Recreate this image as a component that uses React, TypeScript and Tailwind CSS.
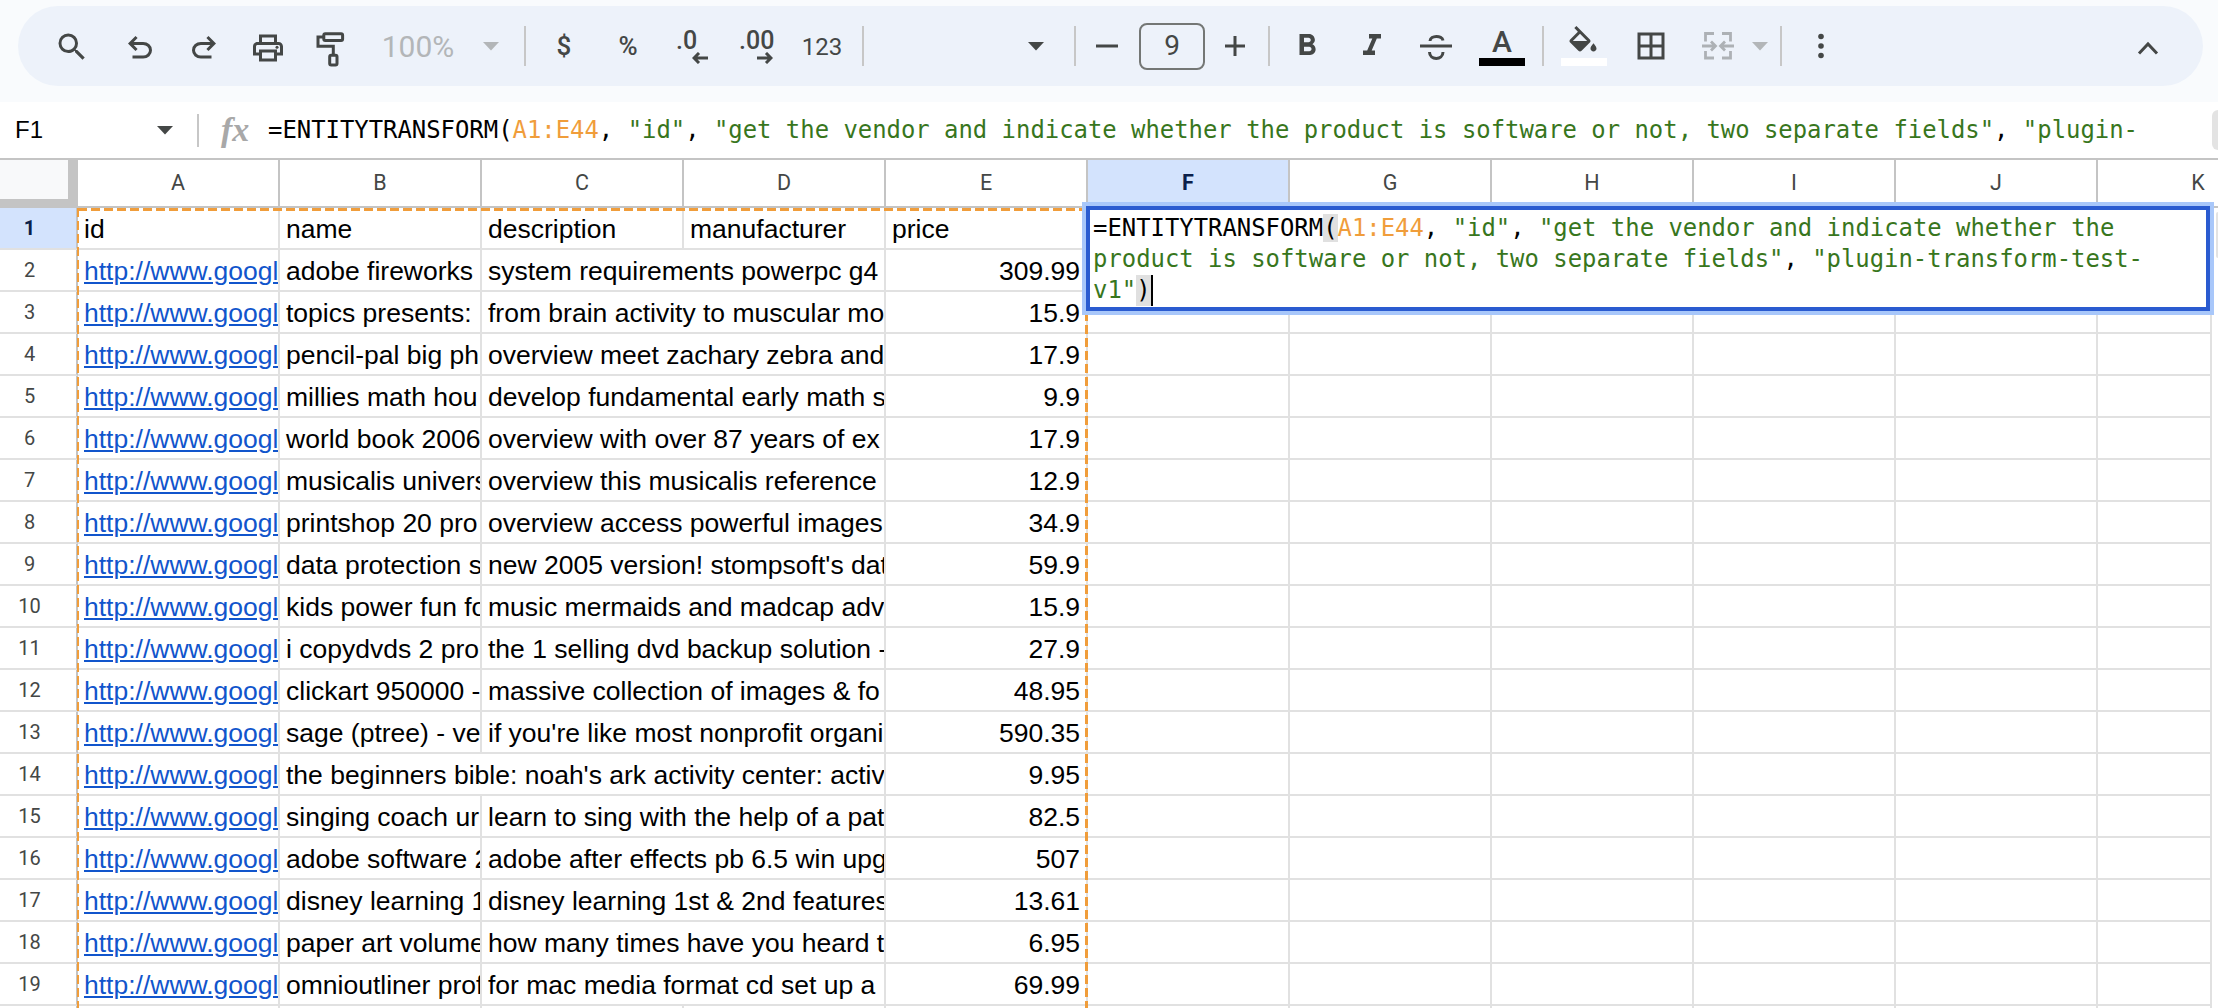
import React from "react";

const INK = "#444746";
const MUTED = "#b3b6b8";

function Svg({ children, className = "" }: { children: React.ReactNode; className?: string }) {
  return (
    <svg viewBox="0 0 24 24" width="36" height="36" fill={INK} className={className}>
      {children}
    </svg>
  );
}

function Slot({ className = "", children }: { className?: string; children?: React.ReactNode }) {
  return <div className={`flex h-[40px] w-[40px] shrink-0 items-center justify-center ${className}`}>{children}</div>;
}

function Caret({ color = INK, className = "" }: { color?: string; className?: string }) {
  return (
    <svg width="20" height="10" viewBox="0 0 20 10" className={`shrink-0 ${className}`}>
      <polygon points="2,1 18,1 10,9.5" fill={color} />
    </svg>
  );
}

function Divider({ className = "" }: { className?: string }) {
  return <div className={`h-[40px] w-[2px] shrink-0 bg-[#c7c7c7] ${className}`} />;
}

function Arrow({ left = false }: { left?: boolean }) {
  return (
    <svg width="17" height="12" viewBox="0 0 17 12" fill="none" stroke={INK} strokeWidth="3" className="block">
      {left ? <path d="M16 6H2M7 1L2 6l5 5" /> : <path d="M1 6h14M10 1l5 5-5 5" />}
    </svg>
  );
}

function Toolbar() {
  return (
    <div className="h-[102px] bg-[#f9fbfd] pl-[18px] pt-[6px]">
      <div className="flex h-[80px] w-[2185px] items-center rounded-[40px] bg-[#edf2fa] pl-[34px] pr-[35px] font-['Roboto',sans-serif] text-[#444746]">
        <Slot className="mt-[2px]">
          <Svg>
            <path d="M15.5 14h-.79l-.28-.27A6.471 6.471 0 0 0 16 9.5 6.5 6.5 0 1 0 9.5 16c1.61 0 3.09-.59 4.23-1.57l.27.28v.79l5 4.99L20.49 19l-4.99-5zm-6 0C7.01 14 5 11.99 5 9.5S7.01 5 9.5 5 14 7.01 14 9.5 11.99 14 9.5 14z" />
          </Svg>
        </Slot>
        <Slot className="ml-[28px] mt-[4px]">
          <Svg>
            <path d="M7 19v-2h7.1q1.575 0 2.738-1T18 13.5t-1.162-2.5T14.1 10H7.8l2.6 2.6L9 14 4 9l5-5 1.4 1.4L7.8 8h6.3q2.425 0 4.163 1.575T20 13.5t-1.737 3.925T14.1 19H7z" />
          </Svg>
        </Slot>
        <Slot className="ml-[24px] mt-[4px]">
          <Svg className="-scale-x-100">
            <path d="M7 19v-2h7.1q1.575 0 2.738-1T18 13.5t-1.162-2.5T14.1 10H7.8l2.6 2.6L9 14 4 9l5-5 1.4 1.4L7.8 8h6.3q2.425 0 4.163 1.575T20 13.5t-1.737 3.925T14.1 19H7z" />
          </Svg>
        </Slot>
        <Slot className="ml-[24px] mt-[4px]">
          <Svg>
            <path d="M19 8h-1V3H6v5H5c-1.66 0-3 1.34-3 3v6h4v4h12v-4h4v-6c0-1.66-1.34-3-3-3zM8 5h8v3H8V5zm8 12v2H8v-4h8v2zm2-2v-2H6v2H4v-4c0-.55.45-1 1-1h14c.55 0 1 .45 1 1v4h-2z" />
            <circle cx="18" cy="11.5" r="1" />
          </Svg>
        </Slot>
        <Slot className="ml-[22px] mt-[4px]">
          <svg width="40" height="40" viewBox="0 0 40 40" fill="none" stroke={INK} strokeWidth="3">
            <rect x="13.8" y="5.8" width="18.8" height="6.6" rx="1.5" />
            <path d="M13.8 9H8v9.3h15.3V27" />
            <rect x="19.7" y="27.3" width="7.3" height="9.7" rx="1.5" />
          </svg>
        </Slot>
        <div className="ml-[30px] mt-[2px] w-[76px] shrink-0 text-center text-[30px] leading-[40px] text-[#b3b6b8]">100%</div>
        <Caret color={MUTED} className="ml-[25px]" />
        <Divider className="ml-[23px]" />
        <Slot className="ml-[18px] text-[26px] font-medium">$</Slot>
        <Slot className="ml-[24px] text-[26px] font-medium">%</Slot>
        <div className="ml-[23px] flex h-[40px] w-[40px] shrink-0 flex-col pl-[5px] pt-[3px] text-[25px] font-medium">
          <div className="h-[24px] leading-[24px]">.0</div>
          <div className="ml-[16px] mt-[-1px]">
            <Arrow left />
          </div>
        </div>
        <div className="ml-[21px] flex h-[40px] w-[50px] shrink-0 flex-col pl-[7px] pt-[3px] text-[25px] font-medium">
          <div className="h-[24px] leading-[24px]">.00</div>
          <div className="ml-[17px] mt-[-1px]">
            <Arrow />
          </div>
        </div>
        <div className="ml-[15px] mt-[1px] w-[50px] shrink-0 text-center text-[24px] leading-[40px]">123</div>
        <Divider className="ml-[15px]" />
        <Caret className="ml-[162px]" />
        <Divider className="ml-[28px]" />
        <Slot className="ml-[11px]">
          <svg width="22" height="4" viewBox="0 0 22 4">
            <rect width="22" height="3" y="0.5" fill={INK} />
          </svg>
        </Slot>
        <div className="ml-[12px] flex h-[47px] w-[66px] shrink-0 items-center justify-center rounded-[8px] border-2 border-[#747775] text-[28px]">
          9
        </div>
        <Slot className="ml-[10px]">
          <svg width="22" height="22" viewBox="0 0 22 22">
            <path d="M9.5 1h3v8.5H21v3h-8.5V21h-3v-8.5H1v-3h8.5z" fill={INK} />
          </svg>
        </Slot>
        <Divider className="ml-[13px]" />
        <Slot className="ml-[17px]">
          <Svg>
            <path d="M15.6 10.79c.97-.67 1.65-1.77 1.65-2.79 0-2.26-1.75-4-4-4H7v14h7.04c2.09 0 3.71-1.7 3.71-3.79 0-1.52-.86-2.82-2.15-3.42zM10 6.5h3c.83 0 1.5.67 1.5 1.5s-.67 1.5-1.5 1.5h-3v-3zm3.5 9H10v-3h3.5c.83 0 1.5.67 1.5 1.5s-.67 1.5-1.5 1.5z" />
          </Svg>
        </Slot>
        <Slot className="ml-[25px]">
          <Svg>
            <path d="M10 4v3h2.21l-3.42 8H6v3h8v-3h-2.21l3.42-8H18V4z" />
          </Svg>
        </Slot>
        <Slot className="ml-[24px]">
          <svg width="40" height="40" viewBox="0 0 40 40" fill="none" stroke={INK} strokeWidth="3">
            <path d="M4 20h32" />
            <path d="M14 15C14.5 9 26 9 27 14.5" />
            <path d="M13.5 26C13.5 34.500 27 34.500 27 26" />
          </svg>
        </Slot>
        <div className="ml-[23px] flex h-[40px] w-[46px] shrink-0 flex-col items-center">
          <div className="h-[32px] text-[30px] font-medium leading-[32px]">A</div>
          <div className="h-[8px] w-[46px] bg-black" />
        </div>
        <Divider className="ml-[17px]" />
        <div className="ml-[17px] flex h-[40px] w-[46px] shrink-0 flex-col items-center">
          <svg viewBox="0 0 24 24" width="36" height="36" fill={INK} className="mr-[3px] shrink-0">
            <path d="M16.56 8.94L7.62 0 6.21 1.41l2.38 2.38-5.15 5.15c-.59.59-.59 1.54 0 2.12l5.5 5.5c.29.29.68.44 1.06.44s.77-.15 1.06-.44l5.5-5.5c.59-.58.59-1.53 0-2.12zM5.21 10L10 5.21 14.79 10H5.21zM19 11.5s-2 2.17-2 3.5c0 1.1.9 2 2 2s2-.9 2-2c0-1.33-2-3.5-2-3.5z" />
          </svg>
          <div className="mt-[-4px] h-[8px] w-[46px] shrink-0 bg-white" />
        </div>
        <Slot className="ml-[24px]">
          <Svg>
            <path d="M3 3v18h18V3H3zm8 16H5v-6h6v6zm0-8H5V5h6v6zm8 8h-6v-6h6v6zm0-8h-6V5h6v6z" />
          </Svg>
        </Slot>
        <Slot className="ml-[27px]">
          <svg width="40" height="40" viewBox="0 0 40 40" fill="none" stroke="#adb1b5" strokeWidth="2.800">
            <path d="M16 7.500H7.500V15.500M7.500 25V32H16M24 7.500H32.500V15.500M32.500 25V32H24" />
            <path d="M4 20H17M13 15.500L17.500 20L13 24.500" />
            <path d="M36 20H23M27 15.500L22.500 20L27 24.500" />
          </svg>
        </Slot>
        <Caret color={MUTED} className="ml-[12px]" />
        <Divider className="ml-[10px]" />
        <Slot className="ml-[19px]">
          <svg width="8" height="28" viewBox="0 0 8 28" fill={INK}>
            <circle cx="4" cy="4.500" r="2.800" />
            <circle cx="4" cy="14" r="2.800" />
            <circle cx="4" cy="23.500" r="2.800" />
          </svg>
        </Slot>
        <Slot className="ml-auto mt-[4px]">
          <svg width="22" height="14" viewBox="0 0 22 14" fill="none" stroke={INK} strokeWidth="3">
            <path d="M2 12.500L11 3l9 9.500" />
          </svg>
        </Slot>
      </div>
    </div>
  );
}

const G = "text-[#38761d]";
const O = "text-[#f09d3b]";
const PAREN = "bg-[#e0e0e0]";
const MONO = "font-['DejaVu_Sans_Mono',monospace] text-[23.900px]";

function FormulaBar() {
  return (
    <div className="flex h-[58px] items-center border-b-2 border-[#c4c4c4] bg-white">
      <div className="w-[154px] shrink-0 pl-[15px] font-['Liberation_Sans',sans-serif] text-[24px] leading-[30px] text-black">F1</div>
      <Caret className="ml-[1px]" />
      <div className="ml-[22px] h-[33px] w-[2px] shrink-0 bg-[#c7c7c7]" />
      <div className="ml-[22px] w-[47px] shrink-0 font-['Liberation_Serif',serif] text-[34px] font-bold italic leading-[34px] text-[#a8a8a8]">fx</div>
      <div className={`w-[1880px] shrink-0 overflow-hidden whitespace-pre leading-[30px] text-black ${MONO}`}>
        =ENTITYTRANSFORM(<span className={O}>A1:E44</span>, <span className={G}>"id"</span>,{" "}
        <span className={G}>"get the vendor and indicate whether the product is software or not, two separate fields"</span>,{" "}
        <span className={G}>"plugin-</span>
      </div>
      <div className="ml-auto h-[40px] w-[6px] shrink-0 rounded-l-[8px] bg-[#e3e3e3]" />
    </div>
  );
}

const COLS = ["A", "B", "C", "D", "E", "F", "G", "H", "I", "J", "K"];
const LINE = "border-r-2 border-b-2 border-[#e1e1e1]";

const ROWS: [string, string, string][] = [
  ["adobe fireworks", "system requirements powerpc g4", "309.99"],
  ["topics presents:", "from brain activity to muscular mo", "15.9"],
  ["pencil-pal big ph", "overview meet zachary zebra and", "17.9"],
  ["millies math hou", "develop fundamental early math s", "9.9"],
  ["world book 2006", "overview with over 87 years of ex", "17.9"],
  ["musicalis univers", "overview this musicalis reference", "12.9"],
  ["printshop 20 pro", "overview access powerful images", "34.9"],
  ["data protection s", "new 2005 version! stompsoft's dat", "59.9"],
  ["kids power fun fo", "music mermaids and madcap adv", "15.9"],
  ["i copydvds 2 pro", "the 1 selling dvd backup solution -", "27.9"],
  ["clickart 950000 -", "massive collection of images & fo", "48.95"],
  ["sage (ptree) - ve", "if you're like most nonprofit organi", "590.35"],
  ["the beginners bible: noah's ark activity center: activ", "", "9.95"],
  ["singing coach ur", "learn to sing with the help of a pat", "82.5"],
  ["adobe software 2", "adobe after effects pb 6.5 win upg", "507"],
  ["disney learning 1", "disney learning 1st & 2nd features", "13.61"],
  ["paper art volume", "how many times have you heard t", "6.95"],
  ["omnioutliner prof", "for mac media format cd set up a", "69.99"],
];

function Empties({ n }: { n: number }) {
  return (
    <>
      {Array.from({ length: n }).map((_, i) => (
        <div key={i} className={LINE} />
      ))}
    </>
  );
}

function RowHead({ n, active = false }: { n: number; active?: boolean }) {
  return (
    <div
      className={`flex items-center justify-center border-r-2 border-b-2 border-r-[#c4c4c4] border-b-[#e1e1e1] pr-[17px] font-['Roboto',sans-serif] text-[20px] ${
        active ? "bg-[#d3e3fd] font-bold text-[#0b1f4b]" : "bg-white text-[#444746]"
      }`}
    >
      {n}
    </div>
  );
}

const CELL = `flex items-center overflow-hidden whitespace-nowrap pl-[6px] pt-[5px] ${LINE}`;

function Sheet() {
  return (
    <div className="relative flex-1 overflow-hidden">
      <div className="grid w-[2212px] grid-cols-[78px_repeat(10,202px)_114px] grid-rows-[47.500px] auto-rows-[42px] font-['Liberation_Sans',sans-serif] text-[26.500px] text-black">
        <div className="h-[47.500px] border-r-[10px] border-b-[9px] border-[#c4c4c4] bg-[#f8f9fa]" />
        {COLS.map((c) => (
          <div
            key={c}
            className={`flex items-center justify-center overflow-visible whitespace-nowrap border-r-2 border-b-2 border-[#c4c4c4] pt-[1px] font-['Roboto',sans-serif] text-[21.500px] ${
              c === "F" ? "bg-[#d3e3fd] font-bold text-[#0b1f4b]" : "text-[#444746]"
            } ${c === "K" ? "w-[202px] border-r-0" : ""}`}
          >
            {c}
          </div>
        ))}

        <RowHead n={1} active />
        <div className={CELL}>id</div>
        <div className={CELL}>name</div>
        <div className={CELL}>description</div>
        <div className={CELL}>manufacturer</div>
        <div className={CELL}>price</div>
        <Empties n={6} />

        {ROWS.map(([name, desc, price], i) => (
          <React.Fragment key={i}>
            <RowHead n={i + 2} />
            <div className={CELL}>
              <span className="text-[#1155cc] underline">http://www.googl</span>
            </div>
            {desc ? (
              <>
                <div className={CELL}>{name}</div>
                <div className={`col-span-2 ${CELL}`}>{desc}</div>
              </>
            ) : (
              <div className={`col-span-3 ${CELL}`}>{name}</div>
            )}
            <div className={`flex items-center justify-end pr-[6px] pt-[5px] ${LINE}`}>{price}</div>
            <Empties n={6} />
          </React.Fragment>
        ))}

        <RowHead n={20} />
        <Empties n={11} />
      </div>

      {/* copy-range marching ants over A1:E44 */}
      <div className="absolute left-[78px] top-[47.500px] h-[3px] w-[1010px] bg-[repeating-linear-gradient(90deg,#f09d3b_0,#f09d3b_9px,transparent_9px,transparent_13px)]" />
      <div className="absolute bottom-0 left-[77px] top-[47.500px] w-[2px] bg-[repeating-linear-gradient(180deg,#f09d3b_0,#f09d3b_9px,transparent_9px,transparent_13px)]" />
      <div className="absolute bottom-0 left-[1085px] top-[47.500px] w-[3px] bg-[repeating-linear-gradient(180deg,#f09d3b_0,#f09d3b_9px,transparent_9px,transparent_13px)]" />

      {/* open cell editor */}
      <div className="absolute left-[1082px] top-[42px] h-[113px] w-[1132px] border-[4px] border-[#a8c7fa] bg-white">
        <div className={`h-full border-[4px] border-[#2a5bd0] pl-[3px] pt-[3px] leading-[31px] text-black ${MONO}`}>
          <div className="whitespace-pre">
            =ENTITYTRANSFORM<span className={PAREN}>(</span>
            <span className={O}>A1:E44</span>, <span className={G}>"id"</span>, <span className={G}>"get the vendor and indicate whether the</span>
          </div>
          <div className={`whitespace-pre ${G}`}>
            product is software or not, two separate fields"<span className="text-black">, </span>"plugin-transform-test-
          </div>
          <div className={`flex whitespace-pre ${G}`}>
            v1"<span className={`${PAREN} text-black`}>)</span>
            <span className="h-[31px] w-[2px] bg-black" />
          </div>
        </div>
      </div>

      {/* scrollbar thumb */}
      <div className="absolute right-0 top-[52px] h-[46px] w-[2px] rounded-l-[4px] bg-[#e3e3e3]" />
    </div>
  );
}

export default function App() {
  return (
    <div className="flex h-[1008px] w-[2218px] flex-col overflow-hidden bg-white">
      <Toolbar />
      <FormulaBar />
      <Sheet />
    </div>
  );
}
